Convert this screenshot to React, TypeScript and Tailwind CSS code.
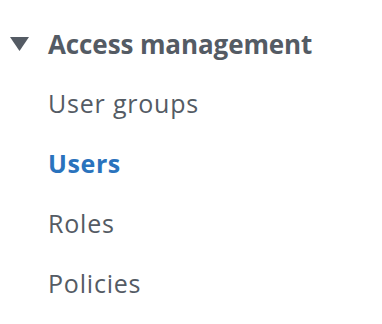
export default function App() {
  const items = [
    { label: 'User groups', active: false },
    { label: 'Users', active: true },
    { label: 'Roles', active: false },
    { label: 'Policies', active: false },
  ];

  return (
    <div className="w-[382px] h-[324px] bg-white pt-[14px] font-['Open_Sans',sans-serif] text-[#545b64]">
      <div className="flex items-center h-[60px]">
        <svg width="19" height="14" viewBox="0 0 19 14" className="ml-[10px] mr-[19px]">
          <polygon points="0,0 19,0 9.5,14" fill="#545b64" />
        </svg>
        <span className="text-[26px] font-bold tracking-[-0.1px]">Access management</span>
      </div>
      <ul className="pl-[48px]">
        {items.map((item) => (
          <li key={item.label} className="h-[60px] flex items-center">
            <span
              className={
                item.active
                  ? 'text-[25px] font-bold tracking-[0.6px] text-[#2a73bd]'
                  : 'text-[25px] tracking-[0.8px] text-[#545b64]'
              }
            >
              {item.label}
            </span>
          </li>
        ))}
      </ul>
    </div>
  );
}
